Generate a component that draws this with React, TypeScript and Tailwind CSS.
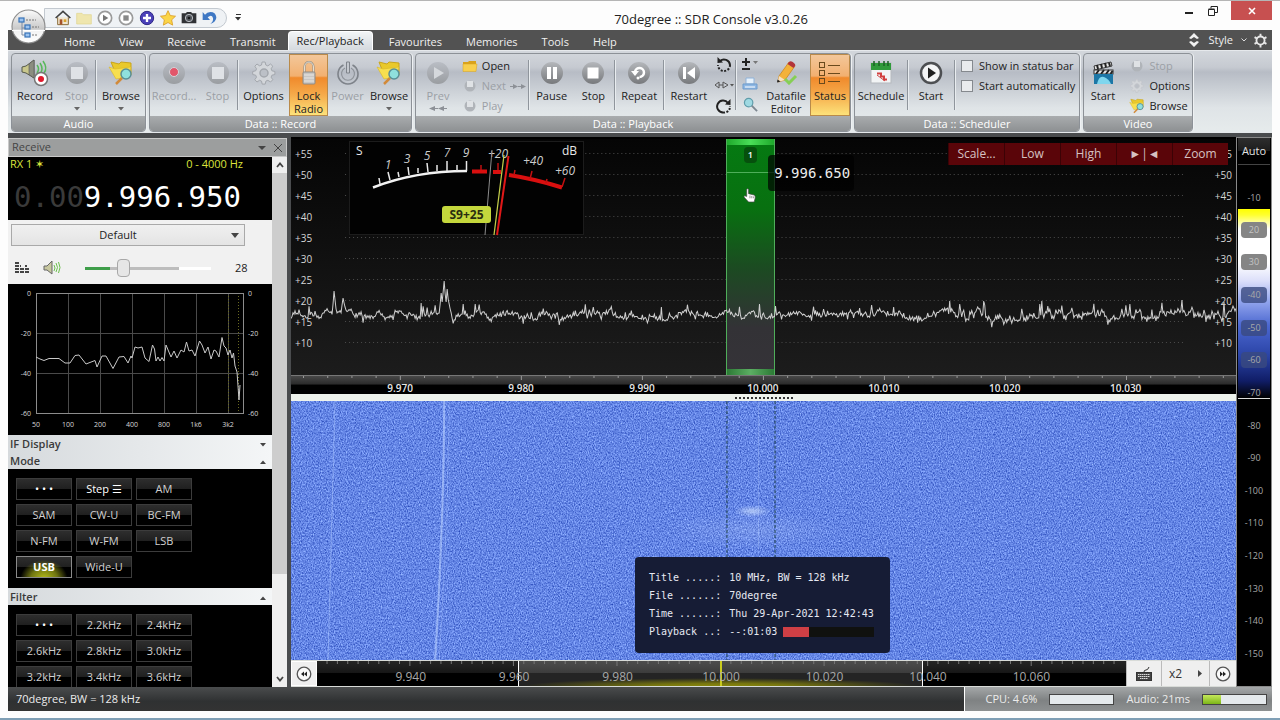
import React from "react";
import type { ReactNode } from "react";

/* ---------- small drawings ---------- */

const Svg = ({ s = 24, children }: { s?: number; children: ReactNode }) => (
  <svg viewBox="0 0 24 24" width={s} height={s} fill="none" aria-hidden="true">
    {children}
  </svg>
);

const Disc = ({ dim = false, children }: { dim?: boolean; children: ReactNode }) => (
  <Svg>
    <defs>
      <linearGradient id={dim ? "discDim" : "discOn"} x1="0" y1="0" x2="0" y2="1">
        <stop offset="0" stopColor={dim ? "#b9bdc4" : "#b4b7bb"} />
        <stop offset="1" stopColor={dim ? "#9a9da1" : "#77797c"} />
      </linearGradient>
    </defs>
    <circle cx="12" cy="12" r="11" fill={dim ? "url(#discDim)" : "url(#discOn)"} />
    {children}
  </Svg>
);

const IconSpeakerRec = () => (
  <svg viewBox="0 0 30 28" width="30" height="28" aria-hidden="true">
    <path d="M2 8l4-1 8-6v18l-8-5-4-1z" fill="#c9c78c" stroke="#55584a" strokeWidth="1" />
    <path d="M9 5l5-4v18l-5-3.500z" fill="#8b8d80" stroke="#555" strokeWidth=".6" />
    <path d="M17 6q3 4 0 8M20 4q4 6 0 11M23 2q5 7 1 12" stroke="#58b85b" strokeWidth="1.500" fill="none" />
    <circle cx="21" cy="20" r="6.500" fill="#fff" stroke="#777" strokeWidth="1.500" />
    <circle cx="21" cy="20" r="3" fill="#e0192c" />
  </svg>
);

const IconBrowse = ({ s = 26 }: { s?: number }) => (
  <svg viewBox="0 0 26 26" width={s} height={s} aria-hidden="true">
    <path d="M3 2l8 2 2-2 10 1v12l-14 2z" fill="#e9c92b" stroke="#c9a51c" />
    <path d="M1 7l6 2 16-2-2 10-13 2z" fill="#f7df4f" stroke="#d9b726" strokeWidth=".6" />
    <path d="M14 18l-6 6" stroke="#d28a3a" strokeWidth="2.500" />
    <circle cx="18" cy="14" r="5" fill="#8fe0dd" stroke="#5a8f96" strokeWidth="1.500" />
  </svg>
);

const IconGear = ({ s = 24, c = "#a3a7ad" }: { s?: number; c?: string }) => (
  <Svg s={s}>
    <path
      d="M9.500 4l.6-3h3l.7 3 2 .9L18.500 3l2.300 2.200-1.700 2.600.8 2 3 .7v3l-3 .7-.8 2 1.700 2.500-2.300 2.300-2.600-1.700-2 .8-.7 3h-3l-.7-3-2-.8L5 21l-2.200-2.300 1.700-2.500-.8-2-3-.7v-3l3-.7.8-2-1.700-2.600L5 3l2.500 1.800z"
      fill="#d3d6da"
      stroke={c}
      strokeWidth="1"
    />
    <circle cx="12" cy="12" r="4" fill="#bcc0c7" stroke={c} strokeWidth="1.500" />
  </Svg>
);

const IconLock = () => (
  <Svg>
    <path d="M7.500 12V6a4.500 5 0 0 1 9 0v6" stroke="#9a9287" strokeWidth="2.200" />
    <path d="M7.500 12V6a4.500 5 0 0 1 9 0v6" stroke="#e5ded0" strokeWidth="1" />
    <rect x="6" y="11" width="12" height="12" rx="1" fill="#c9c7c4" stroke="#8e8b86" />
    <path d="M7 14h10M7 17h10M7 20h10" stroke="#e8e6e3" />
  </Svg>
);

const IconPower = () => (
  <Svg>
    <path d="M7.500 4a10 10 0 1 0 9 0" stroke="#7e838a" strokeWidth="1.600" />
    <path d="M9 7a6.500 6.500 0 1 0 6 0" stroke="#8f949b" strokeWidth="1.200" />
    <path d="M10.500 1h3v11h-3z" fill="#c4c8ce" stroke="#7e838a" />
  </Svg>
);

const IconFolder = () => (
  <svg viewBox="0 0 16 12" width="16" height="12" aria-hidden="true">
    <path d="M1 2h5l1-1h7v10H1z" fill="#d9a21c" />
    <path d="M1 4h14l-1 7.500H1z" fill="#f8cf4d" stroke="#d9a21c" strokeWidth=".5" />
  </svg>
);

const IconDimDisc = () => (
  <svg viewBox="0 0 14 14" width="14" height="14" aria-hidden="true">
    <circle cx="7" cy="7" r="5.500" fill="#b0b4b9" />
    <rect x="4" y="2" width="6" height="6" fill="#dfe2e5" />
  </svg>
);

const IconLoopDots = ({ flip = false }: { flip?: boolean }) => (
  <svg viewBox="0 0 16 16" width="16" height="16" fill="none" aria-hidden="true">
    {flip ? (
      <>
        <path d="M12 5A6 6 0 1 0 7 14.500" stroke="#222" strokeWidth="2" />
        <path d="M7 14.500a6 6 0 0 0 7-6.500" stroke="#222" strokeWidth="2" strokeDasharray="2 1.500" />
        <path d="M9 6.500l5.500.5V1z" fill="#222" />
      </>
    ) : (
      <>
        <path d="M4 5a6 6 0 0 1 10 4" stroke="#222" strokeWidth="2" />
        <path d="M14 9a6 6 0 0 1-12 0" stroke="#222" strokeWidth="2" strokeDasharray="2 1.500" />
        <path d="M7 6.500L1.500 7V1z" fill="#222" />
      </>
    )}
  </svg>
);

const IconPencil = () => (
  <Svg>
    <path d="M5 15L15 1l6 4-10 14-7 2z" fill="#f3b23a" stroke="#c98217" strokeWidth=".7" />
    <path d="M13.500 3L15 1q2-2 5 1 2 2 1 3l-1.500 2z" fill="#b2343a" />
    <path d="M5 15l6 4-7 2z" fill="#f5e2c4" />
    <path d="M3.500 18.500l3 2-3.500 1z" fill="#222" />
    <path d="M11 18l4 4 7-7" stroke="#86cf55" strokeWidth="3" />
  </Svg>
);

const IconStatus = () => (
  <Svg>
    {[2, 10, 18].map((y) => (
      <g key={y} stroke="#6a4a1c">
        <rect x="1.500" y={y - 0.5} width="5" height="5" />
        <path d={`M10 ${y + 2.5}h12`} />
      </g>
    ))}
  </Svg>
);

const IconSchedule = () => (
  <Svg>
    <rect x="2" y="2" width="20" height="20" fill="#f2f4f5" stroke="#b5b9bd" />
    <path d="M2 2h20v7H2z" fill="#2f9a3a" />
    <path d="M5 0v5M10 0v5M15 0v5M19 0v5" stroke="#1d5f25" strokeWidth="1.500" />
    <path d="M8 12.500h4v3h3v3h3" stroke="#d2403f" strokeWidth="2" />
    <path d="M8 14l8 6" stroke="#d2403f" />
  </Svg>
);

const IconStart = () => (
  <Svg>
    <circle cx="12" cy="12" r="10" fill="#f4f5f6" stroke="#4d4f52" strokeWidth="2.500" />
    <path d="M9 6.500l8 5.500-8 5.500z" fill="#1f1f1f" />
  </Svg>
);

const IconClapper = () => (
  <Svg>
    <path d="M3 5L20 1l1 4L4 9z" fill="#e8e8e8" stroke="#333" />
    <path d="M6 4l1 4M10 3l1 4M14 2l1 4M18 2l1 3" stroke="#222" strokeWidth="2" />
    <rect x="3" y="9" width="19" height="4" fill="#e8e8e8" stroke="#333" />
    <path d="M5 13l3-4M10 13l3-4M15 13l3-4M19.500 13l2-3" stroke="#222" strokeWidth="2" />
    <rect x="3" y="13" width="19" height="10" fill="#1d77a6" />
    <path d="M6 23q2-9 7-7t7 7z" fill="#7fd6ee" />
  </Svg>
);

/* ---------- ribbon ---------- */

const Triangle = ({ c = "#666" }: { c?: string }) => (
  <svg viewBox="0 0 6 4" width="6" height="4" aria-hidden="true">
    <path d="M0 0h6L3 3.500z" fill={c} />
  </svg>
);

type BigProps = {
  icon: ReactNode;
  label: string;
  second?: ReactNode;
  w: string;
  dim?: boolean;
  on?: boolean;
};

const Big = ({ icon, label, second, w, dim, on }: BigProps) => (
  <button
    type="button"
    disabled={dim}
    className={`${w} flex shrink-0 flex-col items-center whitespace-nowrap pt-1 text-[11px] leading-[13px] ${
      dim ? "text-[#9b9fa5]" : "text-[#222]"
    } ${
      on
        ? "border border-[#b98a4a] bg-[linear-gradient(#f3c79a_0%,#f2b070_35%,#f08a2c_38%,#f5a949_65%,#fde27a_100%)]"
        : "border border-transparent"
    }`}
  >
    <span className="flex h-7 items-center justify-center">{icon}</span>
    <span className="mt-0.5">{label}</span>
    <span className="flex h-[13px] items-center">{second}</span>
  </button>
);

const Sep = () => <div className="my-1.5 w-px shrink-0 bg-[#8f959c] shadow-[1px_0_0_#e8ecef]" />;

const Group = ({ title, w, children }: { title: string; w: string; children: ReactNode }) => (
  <section
    className={`${w} flex shrink-0 flex-col overflow-hidden rounded-sm border border-[#8c9197] shadow-[1px_0_0_#eef1f3]`}
  >
    <div className="flex min-h-0 flex-1 justify-between">{children}</div>
    <h2 className="h-[15px] bg-[linear-gradient(#a9acae,#8e9193)] text-center text-[11px] leading-[15px] text-white">
      {title}
    </h2>
  </section>
);

const Small = ({ icon, children, dim }: { icon: ReactNode; children: ReactNode; dim?: boolean }) => (
  <button
    type="button"
    disabled={dim}
    className={`flex h-5 items-center gap-1 whitespace-nowrap text-[11px] ${dim ? "text-[#9b9fa5]" : "text-[#222]"}`}
  >
    <span className="flex w-4 justify-center">{icon}</span>
    {children}
  </button>
);

const tabs = ["Home", "View", "Receive", "Transmit", "Rec/Playback", "Favourites", "Memories", "Tools", "Help"];

function TitleBar() {
  const quick: [string, ReactNode][] = [
    [
      "Home",
      <Svg s={16} key="h">
        <path d="M4 11v11h16V11" fill="#f1e6cf" stroke="#8a6c3a" strokeWidth="1.500" />
        <path d="M1 12L12 2l11 10" stroke="#444" strokeWidth="2.500" />
        <rect x="7" y="14" width="4" height="8" fill="#a5522b" />
        <rect x="13" y="14" width="4" height="4" fill="#d9a32f" />
      </Svg>,
    ],
    [
      "Open",
      <Svg s={16} key="o">
        <path d="M1 5h8l2 2h12v14H1z" fill="#efe6ae" stroke="#e0d48e" />
      </Svg>,
    ],
    [
      "Play",
      <Svg s={16} key="p">
        <circle cx="12" cy="12" r="10" fill="#fff" stroke="#9b9b9b" strokeWidth="2.500" />
        <path d="M9 7l8 5-8 5z" fill="#777" />
      </Svg>,
    ],
    [
      "Stop",
      <Svg s={16} key="s">
        <circle cx="12" cy="12" r="10" fill="#fff" stroke="#9b9b9b" strokeWidth="2.500" />
        <rect x="8" y="8" width="8" height="8" fill="#888" />
      </Svg>,
    ],
    [
      "Add",
      <Svg s={16} key="a">
        <circle cx="12" cy="12" r="10" fill="#4a40b8" stroke="#312a86" strokeWidth="1.500" />
        <path d="M12 6v12M6 12h12" stroke="#fff" strokeWidth="3.500" />
      </Svg>,
    ],
    [
      "Favourite",
      <Svg s={16} key="f">
        <path
          d="M12 1l3.400 7.300 7.900 1-5.800 5.500 1.500 7.900-7-3.900-7 3.900 1.500-7.900L.7 9.300l7.900-1z"
          fill="#fbd548"
          stroke="#d99a22"
          strokeWidth="1.200"
        />
      </Svg>,
    ],
    [
      "Camera",
      <Svg s={16} key="c">
        <path d="M1 5h6l2-2h6l2 2h6v15H1z" fill="#303236" />
        <circle cx="12" cy="12" r="5.500" fill="#54585e" stroke="#b8bcc2" strokeWidth="1.500" />
        <circle cx="12" cy="12" r="2" fill="#17181a" />
      </Svg>,
    ],
    [
      "Undo",
      <Svg s={16} key="u">
        <path d="M1 3v12h11L8.500 11q6-5 8 1 1 5-4 9 9-3 9-10-1-8-9-8-5 0-8 4z" fill="#3f78c4" />
      </Svg>,
    ],
  ];
  return (
    <header className="relative flex h-[30px] shrink-0 items-center justify-between border-t border-[#b5b5b5] bg-[#fdfdfd]">
      <div className="ml-11 mt-1 flex items-center">
        <div className="flex h-5 items-center gap-[5px] rounded-r-full border border-[#c3c9d0] bg-[#eff2f5] pl-2.5 pr-2">
          {quick.map(([name, icon]) => (
            <button key={name} type="button" aria-label={name} className="h-4 w-4">
              {icon}
            </button>
          ))}
        </div>
        <button type="button" aria-label="Customise toolbar" className="ml-2 flex flex-col items-center gap-0.5">
          <span className="h-px w-[5px] bg-[#333]" />
          <Triangle c="#333" />
        </button>
      </div>
      <h1 className="absolute inset-x-0 mx-auto w-fit pl-[142px] pt-1.5 text-[13px] leading-5 text-[#222]">
        70degree :: SDR Console v3.0.26
      </h1>
      <div className="mr-2 flex self-start">
        <button type="button" aria-label="Minimise" className="flex h-[19px] w-6 items-end justify-center pb-1.5">
          <span className="h-0.5 w-2 bg-[#222]" />
        </button>
        <button type="button" aria-label="Restore" className="flex h-[19px] w-6 items-center justify-center">
          <svg viewBox="0 0 10 10" width="10" height="10" fill="none" stroke="#222" aria-hidden="true">
            <path d="M.5 3.500h6v6h-6zM.5 3h6" />
            <path d="M3 2.500V.5h6.500v6H7" />
          </svg>
        </button>
        <button
          type="button"
          aria-label="Close"
          className="ml-1.5 flex h-[19px] w-[41px] items-center justify-center bg-[#c75050]"
        >
          <svg viewBox="0 0 8 8" width="8" height="8" stroke="#fff" strokeWidth="1.600" aria-hidden="true">
            <path d="M1 1l6 6M7 1L1 7" />
          </svg>
        </button>
      </div>
      <button type="button" aria-label="Application menu" className="absolute left-[11px] top-2 z-10 h-[35px] w-[35px]">
        <svg viewBox="0 0 35 35" width="35" height="35" aria-hidden="true">
          <defs>
            <linearGradient id="orb" x1="0" y1="0" x2="0" y2="1">
              <stop offset="0" stopColor="#fbfbfb" />
              <stop offset=".58" stopColor="#c8c8c8" />
              <stop offset=".62" stopColor="#f3f3f3" />
              <stop offset="1" stopColor="#fff" />
            </linearGradient>
          </defs>
          <circle cx="17.500" cy="17.500" r="16.500" fill="url(#orb)" stroke="#8f8f8f" strokeWidth="1.200" />
          <path d="M1 21.500h33" stroke="#fff" />
          <path d="M11 13v13M11 19h5M11 26h5" stroke="#7c8da5" fill="none" />
          <g fill="#9cc3ef" stroke="#3773b8" strokeWidth="1.200">
            <rect x="8" y="9" width="5" height="4" />
            <rect x="14" y="16" width="5" height="4" />
            <rect x="14" y="24" width="5" height="4" />
          </g>
          <path d="M15 11h10M21 18h7M21 26h6" stroke="#777" strokeDasharray="2 1" />
        </svg>
      </button>
    </header>
  );
}

function TabRow() {
  return (
    <nav className="flex h-5 shrink-0 items-end justify-between bg-[#525252] text-[11px] leading-4 text-[#f0f0f0]">
      <div className="flex items-end pl-11">
        {tabs.map((t) =>
          t === "Rec/Playback" ? (
            <button
              key={t}
              type="button"
              className="mr-1 h-[19px] rounded-t border-x border-t border-white bg-[linear-gradient(#f2f4f6,#d5d9de)] px-2 text-[#222]"
            >
              {t}
            </button>
          ) : (
            <button key={t} type="button" className="h-5 px-3 pt-1">
              {t}
            </button>
          ),
        )}
      </div>
      <div className="flex h-5 items-center gap-2.5 pr-1">
        <svg viewBox="0 0 10 14" width="10" height="14" aria-hidden="true">
          <path d="M5 0l5 5-2 1-3-2-3 2-2-1zM5 14l5-5-2-1-3 2-3-2-2 1z" fill="#f2f2f2" />
        </svg>
        <button type="button" className="flex items-center gap-2">
          Style
          <svg viewBox="0 0 6 4" width="6" height="4" fill="none" stroke="#ddd" aria-hidden="true">
            <path d="M.5.5L3 3 5.500.5" />
          </svg>
        </button>
        <button type="button" aria-label="Settings" className="-ml-1">
          <svg viewBox="0 0 24 24" width="15" height="15" fill="none" stroke="#e8e8e8" strokeWidth="3" aria-hidden="true">
            <circle cx="12" cy="12" r="6.500" />
            <path d="M12 1v4M12 19v4M2.500 6.500L6 8.500M18 15.500l3.500 2M21.500 6.500L18 8.500M6 15.500l-3.500 2" />
          </svg>
        </button>
      </div>
    </nav>
  );
}

function Ribbon() {
  return (
    <div className="flex h-[83px] shrink-0 gap-[3px] border-y border-[#e6e9ec] bg-[linear-gradient(#d3d7dc_0%,#c6cad1_20%,#b7bcc5_26%,#dfe4e7_70%,#e6ebec_100%)] pl-[3px] pt-0.5">
      <Group title="Audio" w="w-[135px]">
        <Big w="w-[46px]" icon={<IconSpeakerRec />} label="Record" />
        <Big
          w="w-[36px]"
          dim
          icon={<Disc dim><rect x="6" y="6" width="12" height="12" fill="#dfe2e6" /></Disc>}
          label="Stop"
          second={<Triangle />}
        />
        <Sep />
        <Big w="w-[48px]" icon={<IconBrowse />} label="Browse" second={<Triangle />} />
      </Group>
      <Group title="Data :: Record" w="w-[263px]">
        <Big w="w-[48px]" dim icon={<Disc dim><circle cx="12" cy="11" r="4.500" fill="#e2566a" stroke="#d3d6da" /></Disc>} label="Record..." />
        <Big w="w-[38px]" dim icon={<Disc dim><rect x="6" y="6" width="12" height="12" fill="#dfe2e6" /></Disc>} label="Stop" />
        <Sep />
        <Big w="w-[50px]" icon={<IconGear />} label="Options" />
        <Big w="w-[39px]" on icon={<IconLock />} label="Lock" second="Radio" />
        <Big w="w-[38px]" dim icon={<IconPower />} label="Power" />
        <Big w="w-[44px]" icon={<IconBrowse />} label="Browse" second={<Triangle />} />
      </Group>
      <Group title="Data :: Playback" w="w-[436px]">
        <Big
          w="w-[44px]"
          dim
          icon={<Disc dim><path d="M8 6l10 6-10 6z" fill="#d5d8dc" /></Disc>}
          label="Prev"
          second={
            <svg viewBox="0 0 18 5" width="18" height="5" aria-hidden="true">
              <path d="M0 2.500l6-2.500v2h3v1H6v2zM9 2.500L15 0v2h3v1h-3v2z" fill="#8d9197" />
            </svg>
          }
        />
        <div className="flex flex-col pt-0.5">
          <Small icon={<IconFolder />}>Open</Small>
          <Small dim icon={<IconDimDisc />}>
            Next
            <svg viewBox="0 0 16 5" width="16" height="5" aria-hidden="true">
              <path d="M0 2h3V0l5 2.500L3 5V3H0zM8 2h3V0l5 2.500L11 5V3H8z" fill="#8d9197" />
            </svg>
          </Small>
          <Small dim icon={<IconDimDisc />}>Play</Small>
        </div>
        <Sep />
        <Big w="w-[42px]" icon={<Disc><path d="M7 6h4v12H7zM13 6h4v12h-4z" fill="#fff" /></Disc>} label="Pause" />
        <Big w="w-[38px]" icon={<Disc><rect x="6.500" y="6.500" width="11" height="11" fill="#fff" /></Disc>} label="Stop" />
        <Sep />
        <Big
          w="w-[44px]"
          icon={
            <Disc>
              <path d="M8 11a4.500 4.500 0 1 1 4.500 5" stroke="#fff" strokeWidth="2.500" />
              <path d="M4 10h8l-4 5z" fill="#fff" />
              <circle cx="11" cy="17" r="1.500" fill="#fff" />
            </Disc>
          }
          label="Repeat"
        />
        <Sep />
        <Big w="w-[46px]" icon={<Disc><path d="M6 6h3v12H6zM18 6v12l-8-6z" fill="#fff" /></Disc>} label="Restart" />
        <div className="flex w-5 flex-col items-center justify-between py-0.5">
          <button type="button" aria-label="Loop back"><IconLoopDots /></button>
          <button type="button" aria-label="Loop range">
            <svg viewBox="0 0 20 8" width="20" height="8" fill="none" stroke="#555" aria-hidden="true">
              <path d="M1 4l4-3v6zM5 4h4M9 1v6l5-3z" />
              <path d="M16 3h4l-2 2.500z" fill="#555" stroke="none" />
            </svg>
          </button>
          <button type="button" aria-label="Loop forward"><IconLoopDots flip /></button>
        </div>
        <Sep />
        <div className="flex w-6 flex-col items-center justify-between py-1">
          <button type="button" aria-label="Offset">
            <svg viewBox="0 0 18 12" width="18" height="12" fill="none" stroke="#222" strokeWidth="2" aria-hidden="true">
              <path d="M5 0v8M1 4h8M1 11h8" />
              <path d="M12 3h5l-2.500 3z" fill="#777" stroke="none" />
            </svg>
          </button>
          <button type="button" aria-label="Print">
            <svg viewBox="0 0 16 14" width="16" height="14" aria-hidden="true">
              <path d="M4 1h8v6H4z" fill="#e6f1fb" stroke="#8fb3d9" />
              <path d="M1 7h14v5H1z" fill="#8fb8e4" stroke="#6f9bcb" />
              <path d="M3 10h10" stroke="#fff" />
            </svg>
          </button>
          <button type="button" aria-label="Search">
            <svg viewBox="0 0 16 16" width="15" height="15" fill="none" aria-hidden="true">
              <path d="M9 9l6 6" stroke="#7d8790" strokeWidth="2" />
              <circle cx="6" cy="6" r="4.500" fill="#9fd9e2" stroke="#5f9dab" strokeWidth="1.300" />
            </svg>
          </button>
        </div>
        <Big w="w-[44px]" icon={<IconPencil />} label="Datafile" second="Editor" />
        <Big w="w-[40px]" on icon={<IconStatus />} label="Status" />
      </Group>
      <Group title="Data :: Scheduler" w="w-[226px]">
        <Big w="w-[52px]" icon={<IconSchedule />} label="Schedule" />
        <Sep />
        <Big w="w-[46px]" icon={<IconStart />} label="Start" />
        <Sep />
        <div className="flex flex-col pt-0.5 pr-1 pl-1.5">
          {["Show in status bar", "Start automatically"].map((t) => (
            <label key={t} className="flex h-5 items-center gap-1.5 whitespace-nowrap text-[11px] text-[#222]">
              <input type="checkbox" className="h-3 w-3 appearance-none border border-[#85898e] bg-[#e9ebed]" />
              {t}
            </label>
          ))}
        </div>
      </Group>
      <Group title="Video" w="w-[110px]">
        <Big w="w-[38px]" icon={<IconClapper />} label="Start" />
        <div className="flex flex-col pr-0.5 pt-0.5">
          <Small dim icon={<IconDimDisc />}>Stop</Small>
          <Small icon={<IconGear s={14} c="#c2c5c9" />}>Options</Small>
          <Small icon={<IconBrowse s={16} />}>Browse</Small>
        </div>
      </Group>
    </div>
  );
}

/* ---------- left panel ---------- */

const audioTrace =
  "36,357 40,359 44,360.5 49,358.5 59,358.5 65,363 70,363 75,355.5 79,355 86,364 95,360.5 97,367 102,356 106,356 113,368.5 119,357 124,356.5 128,363 131,356 132,358 135,347 138,348 142,347 145,358 149,361.5 152.5,345 154.5,349 156,361 158,357 160,361 162,357.5 164,361 166,345 171,357 174,351 177,358 181,350 184,352 186.5,342 189,351 192,350 195,356 199.5,341 202,345 205,353 208,347 211,359 214,350 216,351 219,357 222,337.5 224,346 226,348 228,355 230,350 232,358 233.5,353 235,366 237,372 239,400 240,385";

function AudioScope() {
  const freqs = ["50", "100", "200", "400", "800", "1k6", "3k2"];
  return (
    <svg viewBox="8 284 264 151" className="block w-full shrink-0 bg-black" role="img" aria-label="Audio spectrum">
      <g stroke="#4a4a4a" strokeWidth="1">
        {[68.5, 100.5, 132.5, 164.5, 196.5, 228.5].map((x) => (
          <path key={x} d={`M${x} 293V413`} />
        ))}
        <path d="M36 333.500H243M36 373.500H243" />
      </g>
      <path d="M228.500 293V413M238.500 293V413" stroke="#6a6a22" strokeDasharray="1 2" />
      <rect x="36.500" y="293.500" width="207" height="120" fill="none" stroke="#8c8c8c" />
      <polyline points={audioTrace} fill="none" stroke="#c9c9c9" strokeWidth="1" />
      <g fontSize="7" fill="#d8d8d8">
        {["0", "-20", "-40", "-60"].map((t, i) => (
          <g key={t}>
            <text x="31" y={296 + i * 40} textAnchor="end">{t}</text>
            <text x="248" y={296 + i * 40}>{t}</text>
          </g>
        ))}
        {freqs.map((t, i) => (
          <text key={t} x={36 + i * 32} y="427" textAnchor="middle">{t}</text>
        ))}
      </g>
    </svg>
  );
}

const PanelBar = ({ title, up }: { title: string; up?: boolean }) => (
  <button
    type="button"
    className="flex h-[17px] w-full shrink-0 items-center justify-between bg-[linear-gradient(90deg,#d6dadd,#f4f6f7)] pl-0.5 pr-1.5 pt-0.5 text-[11px] font-semibold text-[#3a3a3a]"
  >
    {title}
    <span className={up ? "rotate-180" : ""}>
      <Triangle c="#444" />
    </span>
  </button>
);

const Keys = ({ items }: { items: string[] }) => (
  <div className="grid shrink-0 grid-cols-[repeat(3,56px)] auto-rows-[22px] gap-1 bg-black px-2 pb-2.5 pt-[9px]">
    {items.map((t) => (
      <button
        key={t}
        type="button"
        className={
          t === "USB"
            ? "border border-[#8a8a8a] bg-[radial-gradient(ellipse_at_50%_110%,#b7bf1a_0%,#6f7510_35%,transparent_62%),linear-gradient(#2e2e2e,#202020_48%,#000_52%)] text-[11px] font-bold leading-5 text-white"
            : `border border-[#3c3c3c] bg-[linear-gradient(#2e2e2e,#202020_48%,#000_52%)] text-[11px] leading-5 ${
                t === "Step ☰" || t === "• • •" ? "text-white" : "text-[#d0d0d0]"
              }`
        }
      >
        {t}
      </button>
    ))}
  </div>
);

function LeftPanel() {
  return (
    <aside className="flex w-[279px] shrink-0 flex-col overflow-hidden pt-px">
      <div className="flex h-[19px] shrink-0 items-center justify-between border border-[#c9c9c9] bg-[#9c9e9e] pl-[3px] pr-1 text-[11px] text-[#444]">
        Receive
        <span className="flex items-center gap-2">
          <svg viewBox="0 0 8 4" width="8" height="4" aria-hidden="true"><path d="M0 0h8L4 4z" fill="#444" /></svg>
          <svg viewBox="0 0 8 8" width="8" height="8" stroke="#444" aria-hidden="true"><path d="M0 0l8 8M8 0L0 8" /></svg>
        </span>
      </div>
      <div className="flex min-h-0 flex-1">
        <div className="flex w-[264px] shrink-0 flex-col overflow-hidden bg-black">
          <div className="h-[63px] shrink-0 bg-black">
            <div className="flex justify-between pl-0.5 pr-[29px] text-[11px] leading-[14px] text-[#dbe33c]">
              <span>RX 1 ✶</span>
              <span>0 - 4000 Hz</span>
            </div>
            <div className="mt-2 whitespace-nowrap pl-1.5 font-['DejaVu_Sans_Mono',monospace] text-[29px] leading-9 text-white">
              <span className="text-[#3a3a3a]">0.00</span>9.996.950
            </div>
          </div>
          <div className="h-16 shrink-0 bg-[#f1f1f1] pl-[3px] pt-1">
            <div className="relative w-[234px]">
              <select
                aria-label="Audio device"
                defaultValue="Default"
                className="block h-[22px] w-full appearance-none border border-[#a9a9a9] bg-[linear-gradient(#f0f0f0,#e4e4e4)] pr-5 text-center text-[11px] text-[#222]"
              >
                <option>Default</option>
              </select>
              <svg viewBox="0 0 8 5" width="8" height="5" className="pointer-events-none absolute right-1.5 top-[9px]" aria-hidden="true">
                <path d="M0 0h8L4 5z" fill="#444" />
              </svg>
            </div>
            <div className="mt-2.5 flex h-6 items-center">
              <svg viewBox="0 0 16 12" width="16" height="12" className="ml-1" aria-hidden="true">
                <path
                  d="M0 1h4M0 4h4M0 7h4M0 10h4M5 10h4M5 7h4M5 4h1M10 4h2M10 7h5M10 10h5"
                  stroke="#444"
                  strokeWidth="2"
                  strokeDasharray="4 1"
                />
              </svg>
              <svg viewBox="0 0 18 16" width="18" height="16" fill="none" className="ml-3" aria-hidden="true">
                <path d="M1 6h3l5-5v13l-5-4H1z" fill="#c8c8a0" stroke="#666" />
                <path d="M11 5q2 3 0 6M13 3q3 4.500 0 9M15.500 2q3 5.500 0 11" stroke="#6cc04d" />
              </svg>
              <input
                type="range"
                aria-label="Volume"
                defaultValue={28}
                className="ml-6 h-5 w-[126px] appearance-none bg-[linear-gradient(90deg,#3f9e4a_0_20%,#bdbdbd_20%_75%,#fff_75%)] bg-[length:100%_3px] bg-center bg-no-repeat [&::-webkit-slider-thumb]:h-[18px] [&::-webkit-slider-thumb]:w-[13px] [&::-webkit-slider-thumb]:appearance-none [&::-webkit-slider-thumb]:rounded-sm [&::-webkit-slider-thumb]:border [&::-webkit-slider-thumb]:border-[#a8a8a8] [&::-webkit-slider-thumb]:bg-[#e6e6e6]"
              />
              <span className="ml-6 text-[11px] text-[#222]">28</span>
            </div>
          </div>
          <AudioScope />
          <PanelBar title="IF Display" />
          <PanelBar title="Mode" up />
          <Keys items={["• • •", "Step ☰", "AM", "SAM", "CW-U", "BC-FM", "N-FM", "W-FM", "LSB", "USB", "Wide-U"]} />
          <PanelBar title="Filter" up />
          <Keys items={["• • •", "2.2kHz", "2.4kHz", "2.6kHz", "2.8kHz", "3.0kHz", "3.2kHz", "3.4kHz", "3.6kHz"]} />
        </div>
        <div className="flex w-[15px] flex-col items-center bg-[#efefef]">
          <button type="button" aria-label="Scroll up" className="flex h-4 items-center">
            <svg viewBox="0 0 8 6" width="8" height="6" fill="none" stroke="#444" strokeWidth="1.800" aria-hidden="true"><path d="M1 5l3-3.500L7 5" /></svg>
          </button>
          <div className="w-full flex-[404] bg-[#cdcdcd]" />
          <div className="w-full flex-[98]" />
          <button type="button" aria-label="Scroll down" className="flex h-4 items-center">
            <svg viewBox="0 0 8 6" width="8" height="6" fill="none" stroke="#444" strokeWidth="1.800" aria-hidden="true"><path d="M1 1l3 3.500L7 1" /></svg>
          </button>
        </div>
      </div>
    </aside>
  );
}

/* ---------- spectrum ---------- */

const peaks: Record<number, number> = {
  42: 304, 43: 291, 44: 300, 45: 309, 51: 305, 52: 298, 53: 303, 54: 307, 130: 303, 149: 304, 150: 293, 151: 302,
  152: 292, 153: 281, 154: 294, 155: 302, 156: 289, 157: 299, 158: 304, 159: 309, 184: 304, 370: 307, 468: 304,
  484: 306, 568: 308, 658: 301, 668: 304, 692: 301, 693: 305, 748: 304, 750: 301, 838: 304, 890: 300, 932: 302,
  941: 306,
};

function makeTrace(): string {
  let seed = 4711;
  const rnd = () => {
    seed = (seed * 1103515245 + 12345) % 2147483648;
    return seed / 2147483648;
  };
  let slow = 0;
  const pts: string[] = [];
  for (let x = 0; x <= 944; x += 1) {
    slow = slow * 0.84 + (rnd() - 0.5) * 4.4;
    const r = rnd();
    const busy = x > 640 ? 1.15 : 1;
    const fast = x % 2 ? 0 : (rnd() - 0.5) * 7 - (r > 0.93 ? 5 : 0) + (r < 0.07 ? 3 : 0);
    const y = peaks[x] ?? 315 + (slow + fast) * busy;
    pts.push(`${x},${Math.round((y - 139) * 10) / 10}`);
  }
  return pts.join(" ");
}
const spectrumTrace = makeTrace();

const levels = ["+55", "+50", "+45", "+40", "+35", "+30", "+25", "+20", "+15", "+10"];

function Meter() {
  const marks: [string, number, number][] = [
    ["1", 388, 169], ["3", 407, 163], ["5", 427, 160], ["7", 447, 157], ["9", 466, 157],
    ["+20", 498, 158], ["+40", 533, 165], ["+60", 565, 175],
  ];
  return (
    <svg viewBox="349 141 236 98" width="236" height="98" className="absolute left-[58px] top-0.5" role="img" aria-label="Signal meter">
      <rect x="349.500" y="141.500" width="234" height="93" fill="#020202" stroke="#1c1c1c" />
      <path d="M373 187.500Q415 171 467 171" stroke="#f2f2f2" strokeWidth="2.500" fill="none" />
      <path d="M472 171.500h15M493 172h8M509 175Q535 179 562 187.500" stroke="#d90f0f" strokeWidth="4" fill="none" />
      <g stroke="#e8e8e8" strokeWidth="1.500">
        <path d="M380 184l-1-6M390 180l-2-8M399 177l-1-5M409 175l-1-8M418 173v-5M428 172l-1-9M437 171v-6M447 171v-10M457 171v-6M466.500 171v-10" />
      </g>
      <path d="M481 170v-5M498 170v-7M514 175l1-5M530 179l2-8M546 183l1-4M562 187l3-9" stroke="#c01010" strokeWidth="1.500" />
      <g fontSize="12" fill="#ccc" fontStyle="italic" textAnchor="middle">
        {marks.map(([t, x, y]) => (
          <text key={t} x={x} y={y}>{t}</text>
        ))}
      </g>
      <path d="M492 150L485 235" stroke="#8c8c8c" />
      <path d="M504 155L494 235" stroke="#c2cc4a" strokeWidth="1.300" />
      <path d="M508.500 156L497 235" stroke="#e01818" strokeWidth="2" />
      <text x="356" y="155" fontSize="12" fill="#e8e8e8">S</text>
      <text x="562" y="155" fontSize="12" fill="#e8e8e8">dB</text>
      <rect x="442" y="206" width="49" height="17" rx="3" fill="#c4d73c" />
      <text x="466.500" y="219" fontSize="12" fontWeight="700" fill="#2a2d10" textAnchor="middle">S9+25</text>
    </svg>
  );
}

const LevelColumn = () => (
  <div className="flex flex-col pt-[5px] text-[10px] leading-[21px] text-[#d5d5d5]">
    {levels.map((l) => (
      <span key={l}>{l}</span>
    ))}
  </div>
);

function Spectrum() {
  return (
    <div className="relative h-[236px] shrink-0 overflow-hidden bg-[linear-gradient(#050505,#1c1c1c)]">
      <svg viewBox="0 0 944 236" preserveAspectRatio="none" className="absolute inset-0 h-full w-full" aria-hidden="true">
        {levels.map((l, i) => (
          <path key={l} d={`M54 ${14.5 + i * 21}H894`} stroke="#4c4c4c" strokeDasharray="1 3" />
        ))}
      </svg>
      <div className="absolute inset-y-0 left-[46%] w-[5.200%] border-x border-[#4fae5a] bg-[linear-gradient(#057a12_0%,#087010_30%,#1c4a22_55%,#333236_80%,#353338_100%)]">
        <div className="h-1.5 bg-[linear-gradient(90deg,#1faa2c,#4ade58,#1faa2c)]" />
        <div className="absolute inset-x-0 top-[33px] h-px bg-[#4fae5a]" />
        <span className="absolute left-[17px] top-2 rounded-sm bg-[#06500d] px-1 text-[9px] font-semibold leading-4 text-white">1</span>
        <div className="absolute inset-x-0 bottom-0 h-1.5 bg-[linear-gradient(90deg,#2c7a35,#5cae63,#2c7a35)]" />
      </div>
      <svg viewBox="0 0 944 236" preserveAspectRatio="none" className="absolute inset-0 h-full w-full" role="img" aria-label="RF spectrum">
        <polyline points={spectrumTrace} fill="none" stroke="#cfcfcf" strokeWidth="1" />
      </svg>
      <div className="absolute left-[50.500%] top-4 rounded-sm bg-black/70 py-2 pl-1.5 pr-1 font-['DejaVu_Sans_Mono',monospace] text-[14px] leading-5 text-[#ececec]">
        9.996.650
      </div>
      <svg viewBox="0 0 14 16" width="13" height="15" className="absolute left-[47.800%] top-[49px]" aria-hidden="true">
        <path d="M4 1q1.500-1 2 .5V6l6 1.500q1.500.5 1.200 3L12 15H6L1 9.500Q1 7.500 4 9z" fill="#fff" stroke="#444" strokeWidth=".7" />
        <path d="M7.500 8v3M9.500 8.500V11M11.500 9v2" stroke="#666" strokeWidth=".8" />
      </svg>
      <Meter />
      <div className="relative flex justify-between px-1">
        <LevelColumn />
        <LevelColumn />
      </div>
      <div className="absolute right-2 top-1 flex bg-[#5a0509] text-[12px] leading-[22px] text-[#d6c2c2]">
        {["Scale...", "Low", "High", "►|◄", "Zoom"].map((t) => (
          <button key={t} type="button" className="w-14 whitespace-nowrap border-l border-[#3b0205]">
            {t}
          </button>
        ))}
      </div>
    </div>
  );
}

function FreqRuler() {
  const marks = ["9.970", "9.980", "9.990", "10.000", "10.010", "10.020", "10.030"];
  return (
    <div className="relative h-[19px] shrink-0 border-t border-[#777] bg-[linear-gradient(#484848,#2b2b2b_45%,#000_50%)] text-[10px] font-semibold leading-3 text-[#e6e6e6]">
      <svg viewBox="0 0 944 4" preserveAspectRatio="none" className="absolute left-0 top-0 h-1 w-full" aria-hidden="true">
        {Array.from({ length: 39 }, (_, i) => (
          <path key={i} d={`M${12.5 + i * 24.18} 0v${i % 5 === 4 ? 4 : 2}`} stroke="#9a9a9a" />
        ))}
      </svg>
      {marks.map((m, i) => (
        <span key={m} className="absolute top-1.5 -translate-x-1/2" style={{ left: `${((109 + i * 120.8) / 944) * 100}%` }}>
          {m}
        </span>
      ))}
    </div>
  );
}

/* ---------- waterfall ---------- */

function Waterfall() {
  const rows: [string, ReactNode][] = [
    ["Title .....:", "10 MHz, BW = 128 kHz"],
    ["File ......:", "70degree"],
    ["Time ......:", "Thu 29-Apr-2021 12:42:43"],
    [
      "Playback ..:",
      <>
        --:01:03
        <span className="ml-1.5 flex h-2.5 flex-1 bg-[#10110f]">
          <span className="w-[28%] bg-[#cf3f45]" />
        </span>
      </>,
    ],
  ];
  return (
    <div className="relative min-h-0 flex-1 overflow-hidden bg-[#6586e2]">
      <svg className="absolute inset-0 h-full w-full" aria-hidden="true">
        <filter id="grain" x="0" y="0" width="100%" height="100%" colorInterpolationFilters="sRGB">
          <feTurbulence type="fractalNoise" baseFrequency="0.85 0.6" numOctaves="2" seed="7" />
          <feColorMatrix values="0.62 0 0 0 0.08  0.62 0 0 0 0.21  0.45 0 0 0 0.67  0 0 0 0 1" />
        </filter>
        <rect width="100%" height="100%" filter="url(#grain)" />
      </svg>
      <svg viewBox="0 0 944 261" preserveAspectRatio="none" className="absolute inset-0 h-full w-full" fill="none" aria-hidden="true">
        <defs>
          <radialGradient id="burst">
            <stop offset="0" stopColor="#d2e4ff" stopOpacity=".7" />
            <stop offset="1" stopColor="#d2e4ff" stopOpacity="0" />
          </radialGradient>
        </defs>
        <path d="M44 0Q41 110 37 261" stroke="#a9c4ff" strokeOpacity=".55" />
        <path d="M153 0Q153 110 144 261" stroke="#b9d0ff" strokeOpacity=".6" strokeWidth="2" />
        <path d="M158 0Q157 120 148 261" stroke="#a9c4ff" strokeOpacity=".35" />
        <path d="M467 0v150" stroke="#b9d0ff" strokeOpacity=".3" />
        <ellipse cx="461" cy="111" rx="19" ry="6" fill="url(#burst)" />
        <ellipse cx="461" cy="130" rx="90" ry="18" fill="url(#burst)" opacity=".25" />
        <path d="M435.500 0v261M483.500 0v261" stroke="#1c3f49" strokeDasharray="3 2" />
      </svg>
      <div className="absolute left-[36.400%] top-[156px] rounded bg-[#161c35] py-3 pl-3.5 pr-4 font-['DejaVu_Sans_Mono',monospace] text-[10px] leading-[18px] text-[#e6e9f2]">
        {rows.map(([k, v]) => (
          <div key={k} className="flex items-center">
            <span className="mr-2 whitespace-nowrap">{k}</span>
            <span className="flex flex-1 items-center whitespace-nowrap">{v}</span>
          </div>
        ))}
      </div>
    </div>
  );
}

function BandRuler() {
  const marks = ["9.940", "9.960", "9.980", "10.000", "10.020", "10.040", "10.060"];
  return (
    <div className="flex h-[27px] shrink-0 border-y border-[#d8dbd8] bg-[#efefef]">
      <button type="button" aria-label="Band down" className="flex w-[26px] items-center justify-center border border-white">
        <svg viewBox="0 0 16 16" width="16" height="16" aria-hidden="true">
          <circle cx="8" cy="8" r="6.800" fill="#fafafa" stroke="#555" strokeWidth="1.300" />
          <path d="M8 5.500v5L5 8zM11 5.500v5L8 8z" fill="#222" />
        </svg>
      </button>
      <div className="relative min-w-0 flex-1 bg-[linear-gradient(#252525,#161616_48%,#000_50%)] text-[12px] leading-4 text-[#a9a9a9]">
        <div className="absolute inset-y-0 left-[24.800%] w-[50.100%] border-x border-white bg-[radial-gradient(ellipse_at_50%_105%,#8b8a0c_0%,#77760f_25%,transparent_70%),linear-gradient(#4d4d4d,#3c3c3c_48%,#242424_50%)] bg-[length:100%_8px,100%_100%] bg-bottom bg-no-repeat" />
        <svg viewBox="0 0 807 6" preserveAspectRatio="none" className="absolute left-0 top-0 h-1.5 w-full" aria-hidden="true">
          {Array.from({ length: 77 }, (_, i) => (
            <path key={i} d={`M${10 + i * 10.33} 0v${i % 10 === 8 ? 5 : 3}`} stroke="#777" />
          ))}
        </svg>
        <div className="absolute inset-y-0 left-[49.800%] w-0.5 bg-[#c9cb1e]" />
        {marks.map((m, i) => (
          <span key={m} className="absolute top-2 -translate-x-1/2" style={{ left: `${((93.5 + i * 103.2) / 807) * 100}%` }}>
            {m}
          </span>
        ))}
      </div>
      <button type="button" aria-label="Keyboard" className="flex w-9 items-center justify-center border-x border-[#bbb]">
        <svg viewBox="0 0 16 14" width="16" height="14" fill="none" stroke="#333" aria-hidden="true">
          <path d="M8 5Q8 3 10 3t3-3" />
          <rect x=".5" y="5.500" width="15" height="8" fill="#444" />
          <path d="M2 7.500h12M2 9.500h12M4 11.500h8" stroke="#ddd" strokeDasharray="1.500 .5" />
        </svg>
      </button>
      <button type="button" className="flex w-12 items-center justify-center gap-4 border-r border-[#bbb] text-[12px] text-[#333]">
        x2
        <svg viewBox="0 0 4 7" width="4" height="7" aria-hidden="true"><path d="M0 0l4 3.500L0 7z" fill="#444" /></svg>
      </button>
      <button type="button" aria-label="Band up" className="flex w-[26px] items-center justify-center">
        <svg viewBox="0 0 16 16" width="16" height="16" aria-hidden="true">
          <circle cx="8" cy="8" r="6.800" fill="#fafafa" stroke="#555" strokeWidth="1.300" />
          <path d="M5 5.500v5L8 8zM8 5.500v5L11 8z" fill="#222" />
        </svg>
      </button>
    </div>
  );
}

function ColourScale() {
  const vals = ["-10", "20", "30", "-40", "-50", "-60", "-70", "-80", "-90", "-100", "-110", "-120", "-130", "-140", "-150"];
  return (
    <div className="flex w-9 shrink-0 flex-col border border-[#8a8a8a] bg-black px-px">
      <button type="button" className="h-[27px] shrink-0 border-b border-[#444] bg-[linear-gradient(#2e2e2e,#1d1d1d_48%,#000_52%)] text-[11px] text-[#e2e2e2]">
        Auto
      </button>
      <div className="mb-4 mt-4 flex min-h-0 flex-1 flex-col bg-[linear-gradient(#000_28px,#ff0_28px,#ffff30_34px,#fff_48px,#fff_82px,#dcdffa_100px,#93a6ee_120px,#4a66cf_145px,#2a43a5_175px,#101d66_200px,#000_217px,#ddd_217px,#ddd_218px,#000_218px)] text-[9px] text-[#a8a8a8]">
        {vals.map((v, i) => (
          <div key={v} className="flex flex-1 items-center justify-center">
            <span
              className={
                i === 1 || i === 2
                  ? "w-[26px] rounded bg-[#858585] text-center leading-4 text-[#c4c4c4]"
                  : i > 2 && i < 6
                    ? "w-[26px] rounded bg-[#3a4a80]/80 text-center leading-4"
                    : ""
              }
            >
              {v}
            </span>
          </div>
        ))}
      </div>
    </div>
  );
}

/* ---------- page ---------- */

export default function App() {
  return (
    <div className="flex h-screen min-h-[720px] flex-col overflow-hidden bg-[#fdfdfd] font-['Open_Sans','Noto_Sans',sans-serif]">
      <TitleBar />
      <div className="mx-2 flex min-h-0 flex-1 flex-col bg-[#4a4c4e]">
        <TabRow />
        <Ribbon />
        <main className="flex min-h-0 flex-1 pt-1">
          <LeftPanel />
          <div className="ml-1 flex min-w-0 flex-1 flex-col bg-black pt-0.5">
            <Spectrum />
            <FreqRuler />
            <div className="flex h-[7px] shrink-0 items-center justify-center bg-[#eef2ec]">
              <span className="w-[58px] border-t-2 border-dotted border-[#333]" />
            </div>
            <Waterfall />
            <BandRuler />
          </div>
          <ColourScale />
        </main>
        <footer className="flex h-6 shrink-0 items-stretch justify-between bg-[linear-gradient(#4a4c4d,#2f3132_60%,#333)] text-[11px] text-[#ececec]">
          <span className="flex items-center pl-2">70degree, BW = 128 kHz</span>
          <div className="flex w-[308px] items-center justify-end border-l border-white bg-[linear-gradient(#a4a7a8,#7f8283_55%,#8d9091)] pr-[5px]">
            <span className="mr-3">CPU: 4.6%</span>
            <span className="mr-3 h-[11px] w-[65px] border border-[#444] bg-[#e4e9ec]" />
            <span className="mr-3">Audio: 21ms</span>
            <span className="flex h-[11px] w-[65px] border border-[#444] bg-[#e4e9ec]">
              <span className="w-[28%] bg-[linear-gradient(#c5e85a,#7cb518)]" />
            </span>
          </div>
        </footer>
      </div>
      <div className="mt-[7px] h-0.5 shrink-0 bg-[#7f9fb5]" />
    </div>
  );
}
